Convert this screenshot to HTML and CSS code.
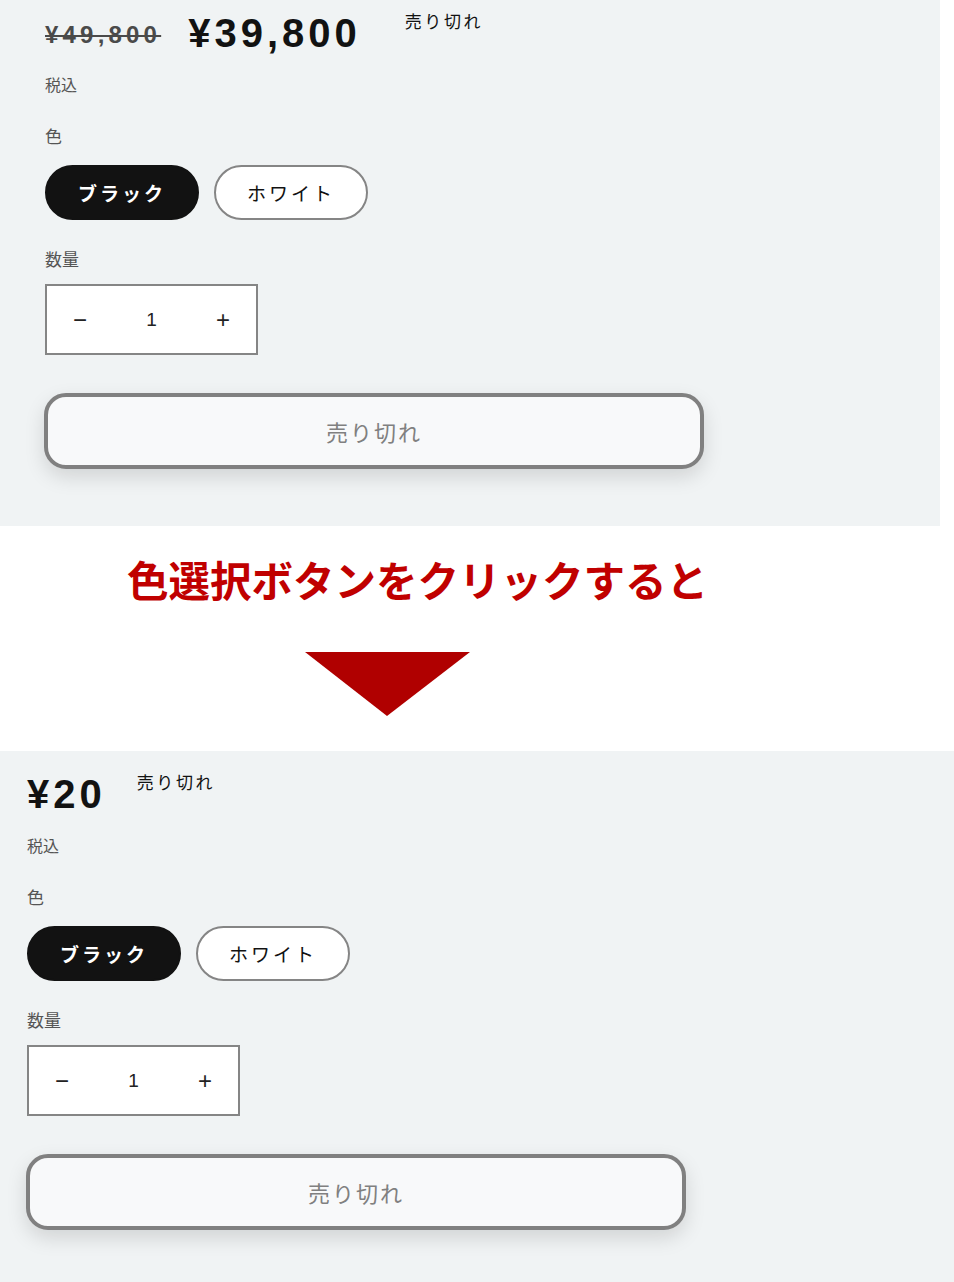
FILE: index.html
```html
<!DOCTYPE html>
<html lang="ja">
<head>
  <meta charset="UTF-8" />
  <title>色選択</title>
  <link rel="stylesheet" href="styles.css">
</head>
<body>
  <section class="panel panel-before">
    <div class="price-row">
      <s class="price-old">¥49,800</s>
      <span class="price-now">¥39,800</span>
      <span class="badge">売り切れ</span>
    </div>
    <p class="tax">税込</p>

    <p class="label">色</p>
    <div class="swatches">
      <button class="swatch active">ブラック</button>
      <button class="swatch">ホワイト</button>
    </div>

    <p class="label">数量</p>
    <div class="qty">
      <span class="qty-btn">−</span><span class="qty-num">1</span><span class="qty-btn">+</span>
    </div>

    <button class="soldout">売り切れ</button>
  </section>

  <div class="note">
    <p>色選択ボタンをクリックすると</p>
    <div class="arrow"></div>
  </div>

  <section class="panel panel-after">
    <div class="price-row">
      <span class="price-now">¥20</span>
      <span class="badge">売り切れ</span>
    </div>
    <p class="tax">税込</p>

    <p class="label">色</p>
    <div class="swatches">
      <button class="swatch active">ブラック</button>
      <button class="swatch">ホワイト</button>
    </div>

    <p class="label">数量</p>
    <div class="qty">
      <span class="qty-btn">−</span><span class="qty-num">1</span><span class="qty-btn">+</span>
    </div>

    <button class="soldout">売り切れ</button>
  </section>
</body>
</html>
```

FILE: styles.css
```css
body {
  margin: 0;
  background: #fff;
  font-family: "Noto Sans CJK JP", "Liberation Sans", sans-serif;
  color: #121212;
  overflow: hidden;
}

.panel {
  background: #f0f3f4;
  padding: 20px 0 0 45px;
}

.panel-before {
  width: 895px;
  height: 516px;
  margin-top: -10px;
}

.panel-after {
  padding-left: 27px;
  height: 530px;
}

.price-row {
  display: flex;
  align-items: flex-start;
  height: 50px;
}

.price-old {
  font-family: "Liberation Sans", sans-serif;
  font-weight: bold;
  font-size: 24px;
  letter-spacing: 4.2px;
  color: #4a4a4a;
  margin-top: 11px;
  margin-right: 27px;
  text-decoration-thickness: 2px;
}

.price-now {
  font-family: "Liberation Sans", sans-serif;
  font-weight: bold;
  font-size: 40px;
  letter-spacing: 4px;
  line-height: 46px;
  margin-right: 44px;
}

.panel-after .price-now {
  margin-right: 31px;
}

.badge {
  font-size: 17px;
  letter-spacing: 2.6px;
  line-height: 22px;
  margin-top: 0;
}

.tax {
  margin: 12px 0 0;
  font-size: 16px;
  line-height: 24px;
  color: #555;
}

.label {
  margin: 28px 0 0;
  font-size: 17px;
  line-height: 24px;
  color: #555;
}

.swatches {
  display: flex;
  gap: 15px;
  margin-top: 17px;
}

.swatch {
  width: 154px;
  height: 55px;
  border-radius: 28px;
  border: 2px solid #858585;
  background: #fff;
  color: #121212;
  font-family: inherit;
  font-size: 19px;
  letter-spacing: 3px;
}

.swatch.active {
  background: #121212;
  border-color: #121212;
  color: #fff;
  font-weight: bold;
}

.swatches + .label {
  margin-top: 27px;
}

.qty {
  display: flex;
  align-items: center;
  justify-content: space-between;
  box-sizing: border-box;
  width: 213px;
  height: 71px;
  margin-top: 13px;
  padding: 0 26px 0 26px;
  border: 2px solid #858585;
  background: #fff;
  color: #222;
}

.qty-btn {
  font-family: "Liberation Sans", sans-serif;
  font-size: 24px;
  line-height: 1;
}

.qty-num {
  font-family: "Liberation Sans", sans-serif;
  font-size: 19px;
}

.soldout {
  display: block;
  width: 660px;
  height: 76px;
  margin: 38px 0 0 -1px;
  border: 4px solid #808080;
  border-radius: 22px;
  background: #f8f9fa;
  box-shadow: 0 8px 20px rgba(0, 0, 0, 0.13);
  font-family: inherit;
  font-size: 22px;
  letter-spacing: 2px;
  color: #808080;
}

.note {
  height: 224px;
  width: 940px;
  padding-top: 1px;
}

.note p {
  margin: 24px 0 0 127px;
  font-size: 41.5px;
  font-weight: bold;
  line-height: 56px;
  color: #c00000;
}

.arrow {
  width: 0;
  height: 0;
  margin: 45px 0 0 305px;
  border-left: 82px solid transparent;
  border-right: 83px solid transparent;
  border-top: 64px solid #b00000;
}
```
